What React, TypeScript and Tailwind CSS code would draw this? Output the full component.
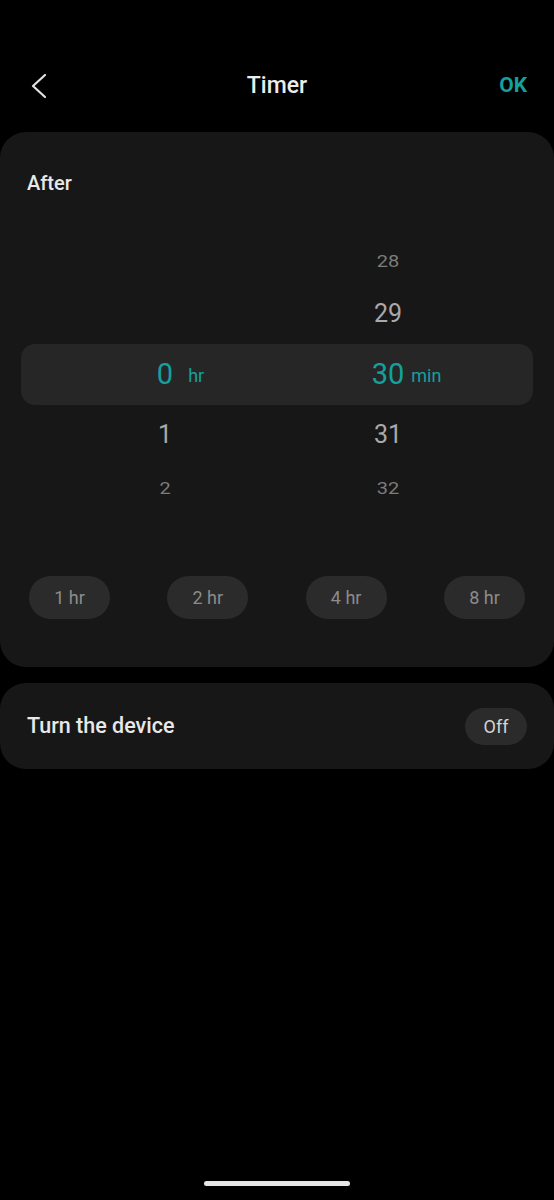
import React from 'react'

const font = { fontFamily: 'Roboto, "Noto Sans", sans-serif' }

function Chevron() {
  return (
    <svg width="20" height="28" viewBox="0 0 20 28" fill="none">
      <polyline points="15,3 3,14 15,25" stroke="#e2e2e2" strokeWidth="2.2" strokeLinecap="round" strokeLinejoin="round" />
    </svg>
  )
}

function Cell({ value, unit, gap, className }: { value: string; unit?: string; gap?: string; className: string }) {
  return (
    <div className="w-[60px] flex justify-center">
      <span className={`relative ${className}`}>
        {value}
        {unit && (
          <span className={`absolute left-full top-1/2 -translate-y-1/2 ${gap} text-[18px] font-normal text-[#13a19e]`}>{unit}</span>
        )}
      </span>
    </div>
  )
}

export default function App() {
  const quick = ['1 hr', '2 hr', '4 hr', '8 hr']

  return (
    <div className="min-h-[1200px] bg-black flex flex-col text-[#e6e6e6]" style={font}>
      {/* header */}
      <div className="mt-[58px] h-[56px] flex items-center justify-between pl-[30px] pr-[27px] relative">
        <Chevron />
        <span className="absolute left-1/2 -translate-x-1/2 text-[23px] font-medium text-[#ececec]">Timer</span>
        <span className="text-[21px] font-bold text-[#13a19e]">OK</span>
      </div>

      {/* timer card */}
      <div className="mt-[18px] bg-[#171717] rounded-[26px] pt-[38px] pb-[48px]">
        <div className="px-[27px] text-[20px] font-medium leading-[26px] text-[#e8e8e8]">After</div>

        <div className="mt-[39px]">
          <div className="h-[52px] flex items-center pl-[135px]">
            <Cell value="" className="" />
            <div className="ml-[163px]">
              <Cell value="28" className="text-[20px] text-[#7c7c7c] scale-y-[0.8] inline-block" />
            </div>
          </div>
          <div className="h-[57px] flex items-center pl-[135px] pb-[3px]">
            <Cell value="" className="" />
            <div className="ml-[163px]">
              <Cell value="29" className="text-[25px] text-[#a9a9a9]" />
            </div>
          </div>
          <div className="h-[61px] mx-[21px] rounded-[14px] bg-[#262626] flex items-center pl-[114px]">
            <Cell value="0" unit="hr" gap="ml-[15px]" className="text-[29px] text-[#13a19e]" />
            <div className="ml-[163px]">
              <Cell value="30" unit="min" gap="ml-[7px]" className="text-[29px] text-[#13a19e]" />
            </div>
          </div>
          <div className="h-[57px] flex items-center pl-[135px] pt-[3px]">
            <Cell value="1" className="text-[25px] text-[#a9a9a9]" />
            <div className="ml-[163px]">
              <Cell value="31" className="text-[25px] text-[#a9a9a9]" />
            </div>
          </div>
          <div className="h-[52px] flex items-center pl-[135px]">
            <Cell value="2" className="text-[20px] text-[#7c7c7c] scale-y-[0.8] inline-block" />
            <div className="ml-[163px]">
              <Cell value="32" className="text-[20px] text-[#7c7c7c] scale-y-[0.8] inline-block" />
            </div>
          </div>
        </div>

        <div className="mt-[62px] px-[29px] flex justify-between">
          {quick.map(q => (
            <button key={q} className="w-[81px] h-[43px] rounded-full bg-[#2b2b2b] text-[18px] text-[#8c8c8c]">
              {q}
            </button>
          ))}
        </div>
      </div>

      {/* action card */}
      <div className="mt-[16px] h-[86px] bg-[#171717] rounded-[26px] flex items-center justify-between pl-[27px] pr-[27px]">
        <span className="text-[21.5px] font-medium text-[#e8e8e8]">Turn the device</span>
        <span className="w-[62px] h-[37px] rounded-full bg-[#2b2b2b] flex items-center justify-center text-[18px] text-[#d4d4d4]">Off</span>
      </div>

      <div className="mt-auto mb-[14px] mx-auto w-[146px] h-[5px] rounded-full bg-[#e6e6e6]" />
    </div>
  )
}
